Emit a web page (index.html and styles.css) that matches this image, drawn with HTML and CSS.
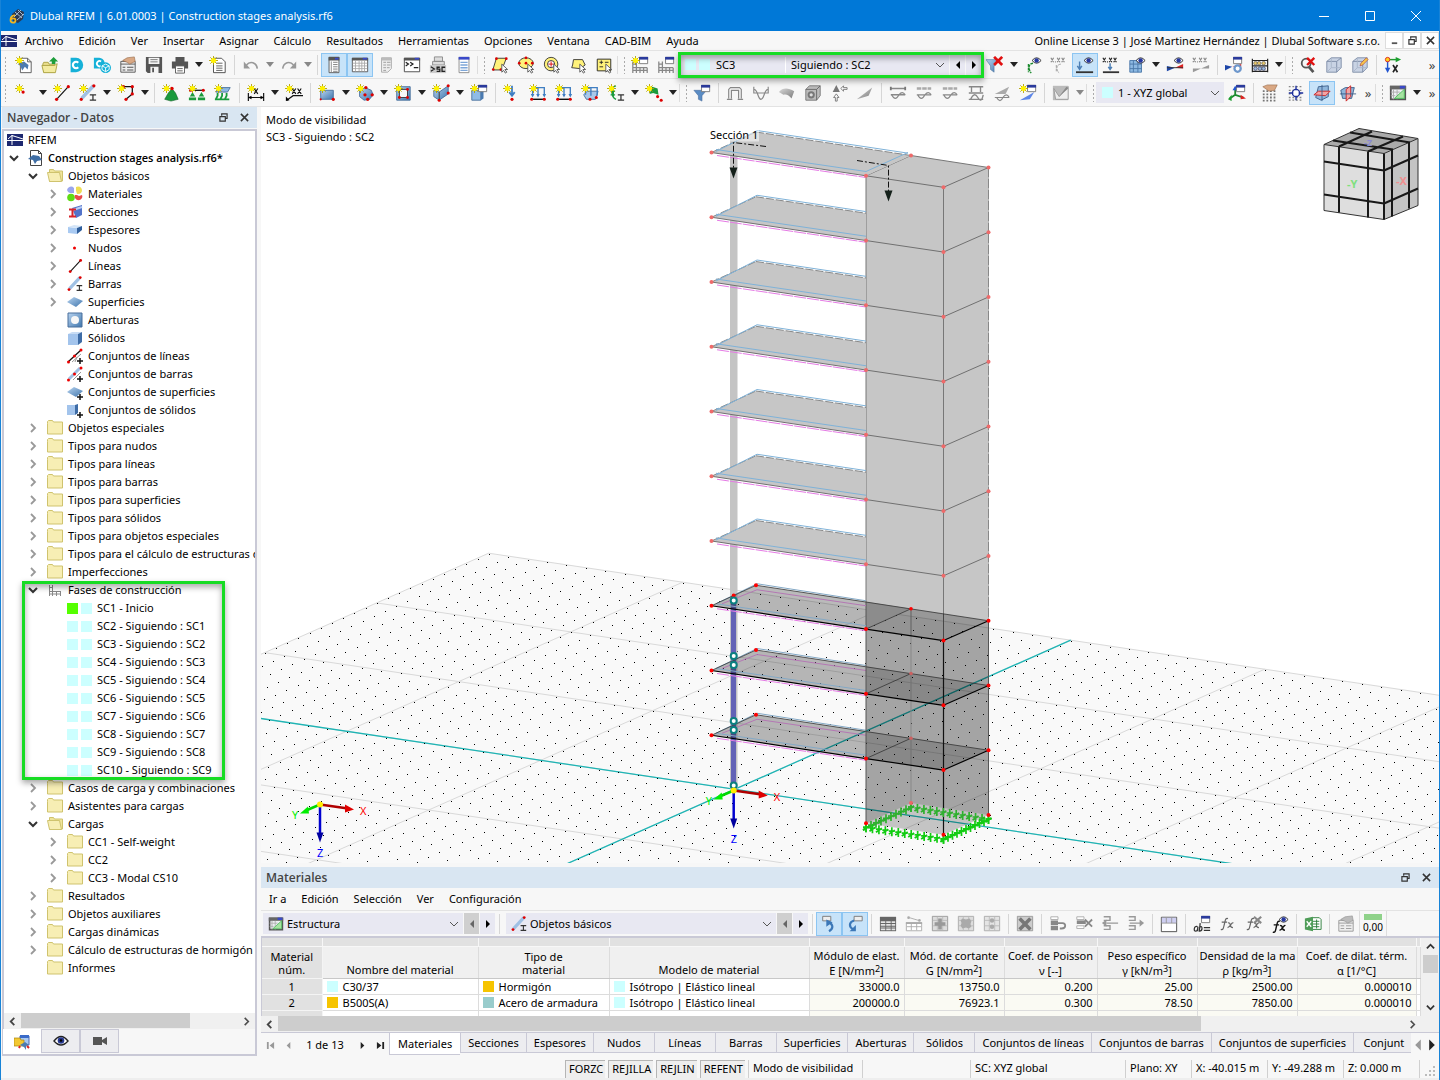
FILE: index.html
```html
<!DOCTYPE html>
<html lang="es">
<head>
<meta charset="utf-8">
<title>Dlubal RFEM | Construction stages analysis.rf6</title>
<link rel="stylesheet" href="styles.css">
</head>
<body>
<svg class="defs" width="0" height="0" aria-hidden="true">
  <defs>
    <linearGradient id="gb" x1="0" y1="0" x2="1" y2="1"><stop offset="0" stop-color="#b9d4f0"/><stop offset="1" stop-color="#3f76ad"/></linearGradient>
    <linearGradient id="gg" x1="0" y1="0" x2="1" y2="1"><stop offset="0" stop-color="#d8d8d8"/><stop offset="1" stop-color="#7b7b7b"/></linearGradient>
  </defs>
</svg>
<svg class="symbols" aria-hidden="true">
  <symbol id="star" viewBox="0 0 20 20"><path d="M5 0v10M0 5h10M1.500 1.500l7 7M8.500 1.500l-7 7" stroke="#b3a100" stroke-width="1"/><circle cx="5" cy="5" r="2.800" fill="#fff200"/></symbol>
  <symbol id="logo" viewBox="0 0 16 12"><path fill="#1d2870" d="M0 0h16v12H0z"/><path d="M0 6.500h16M5 1v10M1 5l4-3.500L16 5" stroke="#fff" fill="none"/></symbol>
  <symbol id="app" viewBox="0 0 16 16"><path d="M3 6l6-5 6 3-1 7-5 4-5-2z" fill="#2c3a52"/><path d="M6 4l7 6M9 2l5 5M5 9l7-7M8 12l7-6" stroke="#a9bdd4"/><path d="M6 7.500C3 7 1.500 9.500 1.500 12c0 3.500 5 3.500 5 .5s-4-2.500-5-.5" fill="none" stroke="#f3b61f" stroke-width="1.800"/></symbol>
  <symbol id="new" viewBox="0 0 20 20"><path d="M6 2.500h8l4 4v12H6z" fill="#fff" stroke="#555"/><path d="M14 2.500v4h4" fill="none" stroke="#555"/><path d="M3 9l7-3 5 4-1 5-3-3-3 4-2-5z" fill="#4d7cb0"/><use href="#star"/></symbol>
  <symbol id="open" viewBox="0 0 20 20"><path d="M2 9l1-2h5l1 2h6v9H3z" fill="#e9dd8b" stroke="#a9a040"/><path d="M1 10.500h14l3-2-2 10H3z" fill="#f3eba0" stroke="#a9a040"/><path d="M12 9V6h-3l5-5 5 5h-3v3z" fill="#1d9e3b"/></symbol>
  <symbol id="cee" viewBox="0 0 20 20"><path d="M4 2h6a8 8 0 0 1 0 16H4z" fill="#16b1d8"/><path d="M12.500 7.500a3.500 3.500 0 1 0 0 5" stroke="#fff" stroke-width="2.400" fill="none"/></symbol>
  <symbol id="cloud" viewBox="0 0 20 20"><path d="M1 2h6a7 7 0 0 1 4 12H1z" fill="#16b1d8"/><path d="M9 6a3 3 0 1 0 0 5" stroke="#fff" stroke-width="2" fill="none"/><circle cx="14" cy="13" r="6" fill="#16b1d8"/><path d="M14 9l4 2v4l-4 2.500-4-2.500v-4zM10 11l4 2 4-2M14 13v4.500" fill="none" stroke="#fff"/></symbol>
  <symbol id="block" viewBox="0 0 20 20"><path d="M2 6h16v12H2z" fill="#eee" stroke="#555"/><path d="M2 9h16" stroke="#555"/><path d="M4 12h3v1H4zm5 0h7v1H9zm-5 3h3v1H4zm5 0h7v1H9z" fill="#555"/><path d="M4 5l5-3 8-1 1 5-6 3-3-2z" fill="#d9a884" stroke="#8d5f3d" stroke-width=".6"/></symbol>
  <symbol id="save" viewBox="0 0 20 20"><path d="M1 1h18v18H3l-2-2z" fill="#555"/><path d="M4 2h12v7H4zM6 12h9v7H6z" fill="#f4f4f4"/><path d="M6 4h8M6 6.500h8" stroke="#777"/><path d="M8 13h2v5H8z" fill="#555"/></symbol>
  <symbol id="print" viewBox="0 0 20 20"><path d="M5 1h10v5H5zM1 6h18v8H1z" fill="#555"/><path d="M5 11h10v8H5z" fill="#fff" stroke="#555"/><path d="M7 14h6M7 16.500h6" stroke="#555"/></symbol>
  <symbol id="report" viewBox="0 0 20 20"><path d="M5 2.500h9l4 4v12H5z" fill="#fff" stroke="#444"/><path d="M8 8h7M8 11h7M8 13.500h7M8 16h7" stroke="#555"/><use href="#star"/></symbol>
  <symbol id="undo" viewBox="0 0 20 20"><path d="M5 10c4-5 11-3 12 4" fill="none" stroke="#999" stroke-width="1.800"/><path d="M2 6v8h7z" fill="#999"/></symbol>
  <symbol id="redo" viewBox="0 0 20 20"><path d="M15 10C11 5 4 7 3 14" fill="none" stroke="#999" stroke-width="1.800"/><path d="M18 6v8h-7z" fill="#999"/></symbol>
  <symbol id="navi" viewBox="0 0 20 20"><path d="M4.500 1.500h11v17h-11z" fill="#fff" stroke="#555"/><path d="M4 1h12v4H4z" fill="#555"/><path d="M11 2h4v2h-4z" fill="#3a49c8"/><path d="M7 6v12" stroke="#888"/><path d="M9 7h5M9 9.500h5M9 12h5M9 14.500h5M9 17h5" stroke="#777"/></symbol>
  <symbol id="grid" viewBox="0 0 20 20"><path d="M1.500 2.500h17v15h-17z" fill="#fff" stroke="#555"/><path d="M1 2h18v3H1z" fill="#555"/><path d="M13 2h5v2h-5z" fill="#3a49c8"/><path d="M5 5v12M9 5v12M12 5v12M15 5v12M2 8h16M2 11h16M2 14h16" stroke="#aaa"/></symbol>
  <symbol id="navg" viewBox="0 0 20 20"><path d="M5 2h11v12l-4 4H5z" fill="#eee" stroke="#aaa"/><path d="M5 2h11v3H5z" fill="#bbb"/><path d="M7 7h3M11 7h4M7 10h3M11 10h4M7 13h3M11 13h3M7 16h3" stroke="#999"/></symbol>
  <symbol id="con" viewBox="0 0 20 20"><path d="M1.500 2.500h17v15h-17z" fill="#fff" stroke="#444"/><path d="M1 2h18v3H1z" fill="#555"/><path d="M13 2h5v2h-5z" fill="#3a49c8"/><path d="M3 7l3 2-3 2M8 7l3 2-3 2M12 13h5" fill="none" stroke="#222" stroke-width="1.400"/></symbol>
  <symbol id="sc" viewBox="0 0 20 20"><path d="M6 1h9v5H6zM4 6h13v4H4z" fill="#ddd" stroke="#888"/><path d="M1 10h18v9H1z" fill="#ccc"/><path d="M2 12l4 2.500L2 17M12 12.500H9v2h3v2.500H8.500M18 12.500h-3.500v4.500H18" fill="none" stroke="#222" stroke-width="1.400"/></symbol>
  <symbol id="navb" viewBox="0 0 20 20"><path d="M4.500 1.500h11v17h-11z" fill="#fff" stroke="#888"/><path d="M4 1h12v3H4z" fill="#3a49c8"/><path d="M6 7h8M6 10h8M6 13h8M6 16h8" stroke="#7da6d8" stroke-width="1.500"/></symbol>
  <symbol id="cur" viewBox="0 0 20 20"><path d="M12 9v9l2-2 2 3 1.500-1-2-3h3z" fill="#fff" stroke="#555"/></symbol>
  <symbol id="selp" viewBox="0 0 20 20"><path d="M6 2.500h11l-5 13H2z" fill="#fff27a" stroke="#333"/><g fill="#d00"><circle cx="6" cy="3" r="1.500"/><circle cx="17" cy="3" r="1.500"/><circle cx="2.500" cy="15" r="1.500"/><circle cx="11" cy="15" r="1.500"/></g><use href="#cur"/></symbol>
  <symbol id="sele" viewBox="0 0 20 20"><ellipse cx="10" cy="8" rx="8" ry="6" fill="#fff27a" stroke="#333"/><g fill="#d00"><circle cx="2.500" cy="8" r="1.500"/><circle cx="10" cy="2" r="1.500"/><circle cx="10" cy="8" r="1.500"/><circle cx="17" cy="8" r="1.500"/></g><use href="#cur"/></symbol>
  <symbol id="selc" viewBox="0 0 20 20"><circle cx="9" cy="9" r="7.500" fill="#fff27a" stroke="#333"/><circle cx="9" cy="9" r="4" fill="#fff" stroke="#333"/><path d="M9 6v6M6 9h6" stroke="#d00"/><use href="#cur"/></symbol>
  <symbol id="sell" viewBox="0 0 20 20"><path d="M5 4h10l3 6-6 4-9-1 1-3z" fill="#fff27a" stroke="#333"/><use href="#cur"/></symbol>
  <symbol id="selpm" viewBox="0 0 20 20"><path d="M2.500 3.500h15v13h-15z" fill="#fff27a" stroke="#222"/><path d="M5 7h4M7 5v4M5 12h4M11 7h4" stroke="#222"/><use href="#cur"/></symbol>
  <symbol id="win" viewBox="0 0 20 20"><path d="M9.500 1.500h9v7h-9z" fill="#fff" stroke="#777"/><path d="M9 1h10v3H9z" fill="#2a3a9c"/></symbol>
  <symbol id="stg" viewBox="0 0 20 20"><path d="M2 6v13M6 6v13M2 9h4M2 13h16M10 13v6M14 13v6M18 13v6M2 16h16" stroke="#888" stroke-width="1.400" fill="none"/><use href="#win"/></symbol>
  <symbol id="stgn" viewBox="0 0 20 20"><use href="#stg"/><use href="#star"/></symbol>
  <symbol id="funx" viewBox="0 0 20 20"><path d="M0 4h14l-5 7v7l-4-3v-4z" fill="url(#gb)" stroke="#5076a0" stroke-width=".6"/><path d="M9 1l9 9M18 1l-9 9" stroke="#e01010" stroke-width="3"/></symbol>
  <symbol id="eye" viewBox="0 0 20 20"><path d="M9 5q5-6 10 0-5 6-10 0z" fill="#fff" stroke="#222"/><circle cx="14" cy="5" r="2.500" fill="#2638a0"/></symbol>
  <symbol id="xxx" viewBox="0 0 20 20"><path d="M1 2l3 5M4 2L1 7M5.500 6.500h1M8 2l3 5M11 2L8 7M13 2l3 5M16 2l-3 5" fill="none" stroke-width="1.300"/></symbol>
  <symbol id="eye1" viewBox="0 0 20 20"><path d="M10 8c-6 1-5 7-2 11M5 9v9" fill="none" stroke="#1b8a2e" stroke-width="1.600" stroke-dasharray="3 1"/><use href="#eye"/></symbol>
  <symbol id="xxg" viewBox="0 0 20 20"><use href="#xxx" stroke="#888"/><path d="M12 9c-6 1-5 6-2 10M7 10v8" fill="none" stroke="#999" stroke-dasharray="3 1"/></symbol>
  <symbol id="eye2" viewBox="0 0 20 20"><path d="M4 6v8M1.500 11L4 15l2.500-4" stroke="#4c7fb5" fill="none" stroke-width="1.600"/><path d="M0 18h19" stroke="#333" stroke-width="2"/><use href="#eye"/></symbol>
  <symbol id="xxb" viewBox="0 0 20 20"><use href="#xxx" stroke="#222"/><path d="M9 8v7M7 12l2 3 2-3" stroke="#4c7fb5" fill="none" stroke-width="1.600"/><path d="M1 18h18" stroke="#333" stroke-width="2"/></symbol>
  <symbol id="gride" viewBox="0 0 20 20"><path d="M2 5h13v13H2z" fill="#8db9e2" stroke="#4b78a8"/><path d="M6 5v13M11 5v13M2 9h13M2 14h13" stroke="#4b78a8"/><use href="#eye"/></symbol>
  <symbol id="wede" viewBox="0 0 20 20"><path d="M1 11v6l9-4z" fill="#1d46a8"/><path d="M10 13l9-4v5z" fill="#d22"/><path d="M1 13h18" stroke="#333"/><use href="#eye"/></symbol>
  <symbol id="wedg" viewBox="0 0 20 20"><use href="#xxx" stroke="#888"/><path d="M1 11v7l9-4 9-4v4H1z" fill="#999"/></symbol>
  <symbol id="wedw" viewBox="0 0 20 20"><path d="M0 10v6l8-4z" fill="#1d46a8"/><path d="M8 12h10v-3z" fill="#d22"/><circle cx="14" cy="14" r="3.500" fill="#fff" stroke="#6d97cc" stroke-width="2.500"/><use href="#win"/></symbol>
  <symbol id="aba" viewBox="0 0 20 20"><path d="M1.500 3v15M18.500 3v15M1 5h18M1 11h18M1 17h18" stroke="#222" stroke-width="1.300"/><g fill="#e8c76a" stroke="#555" stroke-width=".7"><circle cx="5" cy="8" r="2"/><circle cx="9" cy="8" r="2"/><circle cx="14" cy="8" r="2"/></g><g fill="#9dbbe0" stroke="#335" stroke-width=".7"><circle cx="5" cy="14" r="2"/><circle cx="10" cy="14" r="2"/><circle cx="14" cy="14" r="2"/></g></symbol>
  <symbol id="magx" viewBox="0 0 20 20"><circle cx="8" cy="8" r="5" fill="none" stroke="#555" stroke-width="2"/><path d="M11 12l5 6" stroke="#555" stroke-width="3"/><path d="M9 2l8 8M17 2L9 10" stroke="#e01010" stroke-width="2.600"/></symbol>
  <symbol id="cube" viewBox="0 0 20 20"><path d="M2 6l5-4h11v11l-5 5H2z" fill="#c9d3e4" stroke="#7c8ba5"/><path d="M2 6h11v12M13 6l5-4" fill="none" stroke="#7c8ba5"/><path d="M7 2v11h11M7 13l-5 5" fill="none" stroke="#a9b5ca"/></symbol>
  <symbol id="cubep" viewBox="0 0 20 20"><use href="#cube"/><path d="M10 11l1-3 6-6 2 2-6 6z" fill="#f7c64a" stroke="#a33" stroke-width=".6"/></symbol>
  <symbol id="axx" viewBox="0 0 20 20"><path d="M4 4h10" stroke="#1b9e2e" stroke-width="1.600"/><path d="M13 1l6 3-6 3z" fill="#1b9e2e"/><path d="M4 4v10" stroke="#2255d0" stroke-width="1.600"/><path d="M1 13h6l-3 6z" fill="#2255d0"/><circle cx="4" cy="4" r="2.500" fill="#ffd21a" stroke="#d22"/><path d="M10 10l5 8M15 10l-5 8" stroke="#222" stroke-width="1.800"/></symbol>
  <symbol id="node" viewBox="0 0 20 20"><use href="#star"/><circle cx="9" cy="9" r="1.800" fill="#d00"/></symbol>
  <symbol id="line" viewBox="0 0 20 20"><path d="M4 17L17 3" stroke="#111" stroke-width="1.300"/><circle cx="4" cy="17" r="1.800" fill="#d00"/><circle cx="17" cy="3" r="1.800" fill="#d00"/></symbol>
  <symbol id="linen" viewBox="0 0 20 20"><use href="#line"/><use href="#star"/></symbol>
  <symbol id="bar" viewBox="0 0 20 20"><path d="M3 16L16 2" stroke="#9fc0e4" stroke-width="4"/><circle cx="2.500" cy="17" r="1.800" fill="#d00"/><circle cx="16.500" cy="2" r="1.800" fill="#d00"/><path d="M12 12h7M12 18h7M15.500 12v6" stroke="#333" stroke-width="1.400"/></symbol>
  <symbol id="barn" viewBox="0 0 20 20"><use href="#bar"/><use href="#star"/></symbol>
  <symbol id="poly" viewBox="0 0 20 20"><path d="M7 3h10v8l-7 6" fill="none" stroke="#111" stroke-width="1.400"/><g fill="#d00"><circle cx="7" cy="3" r="1.800"/><circle cx="17" cy="3" r="1.800"/><circle cx="17" cy="11" r="1.800"/><circle cx="10" cy="17" r="1.800"/></g><use href="#star"/></symbol>
  <symbol id="sup" viewBox="0 0 20 20"><path d="M11 5l4 5 3 7-8 2-7-2 4-7z" fill="#1a9a3c" stroke="#0c5c20" stroke-width=".6"/><circle cx="11" cy="5" r="2" fill="#d00"/><use href="#star"/></symbol>
  <symbol id="supl" viewBox="0 0 20 20"><path d="M2 7h16" stroke="#111" stroke-width="1.400"/><path d="M5 9l3 5H2zM15 9l3 5h-6zM1 15h8v3H1zM11 15h8v3h-8z" fill="#1a9a3c"/><circle cx="3" cy="7" r="1.700" fill="#d00"/><circle cx="17" cy="7" r="1.700" fill="#d00"/><use href="#star"/></symbol>
  <symbol id="sups" viewBox="0 0 20 20"><path d="M5 4h13l-3 5H2z" fill="#8db9e2" stroke="#486f9c"/><path d="M4 10v3l-2 4M9 10v3l-2 4M14 10v3l-2 4M1 17h16" fill="none" stroke="#1a9a3c" stroke-width="2"/><use href="#star"/></symbol>
  <symbol id="dim" viewBox="0 0 20 20"><path d="M1.500 10v9M18.500 10v9M1 15h18M8 5l4 6M12 5l-4 6" stroke="#111" stroke-width="1.300"/><path d="M1 15l4-2v4zM19 15l-4-2v4z"/><use href="#star"/></symbol>
  <symbol id="dimxx" viewBox="0 0 20 20"><path d="M2 18l7-5h11M8 5l4 6M12 5l-4 6M14 5l4 6M18 5l-4 6" stroke="#111" fill="none" stroke-width="1.300"/><path d="M1 19v-5l4 4z"/><use href="#star"/></symbol>
  <symbol id="srf" viewBox="0 0 20 20"><path d="M3 7h14v10H3z" fill="url(#gb)" stroke="#486f9c"/><circle cx="17" cy="17" r="1.800" fill="#d00"/><circle cx="3" cy="17" r="1.200" fill="#d00"/><use href="#star"/></symbol>
  <symbol id="srf2" viewBox="0 0 20 20"><path d="M4 7l6-3 7 3 2 5-4 5-6 1-5-4z" fill="url(#gb)" stroke="#486f9c"/><g fill="#d00"><circle cx="11" cy="4" r="1.800"/><circle cx="18" cy="12" r="1.800"/><circle cx="10" cy="12" r="1.800"/><circle cx="13" cy="17" r="1.800"/></g><use href="#star"/></symbol>
  <symbol id="opn" viewBox="0 0 20 20"><path d="M3 3h15v15H3z" fill="url(#gb)" stroke="#486f9c"/><path d="M6 6h9v9H6z" fill="#f7f7f7" stroke="#333"/><g fill="#d00"><circle cx="6" cy="15" r="1.600"/><circle cx="15" cy="15" r="1.600"/><circle cx="15" cy="6" r="1.600"/></g><use href="#star"/></symbol>
  <symbol id="sol" viewBox="0 0 20 20"><path d="M2 7l6 2 10-7v9l-10 7-6-4z" fill="url(#gb)" stroke="#486f9c"/><path d="M8 9v9" stroke="#333"/><g fill="#d00"><circle cx="8" cy="18" r="1.700"/><circle cx="18" cy="2" r="1.700"/><circle cx="18" cy="10" r="1.700"/></g><use href="#star"/></symbol>
  <symbol id="solw" viewBox="0 0 20 20"><path d="M2 7h10v11H2z" fill="#8fbbe6" stroke="#486f9c"/><path d="M12 7l3-2v11l-3 2z" fill="#4a7ab0"/><use href="#win"/><use href="#star"/></symbol>
  <symbol id="ld1" viewBox="0 0 20 20"><path d="M10 2v9M7 9l3 4 3-4" stroke="#3f7ec2" stroke-width="2" fill="none"/><circle cx="10" cy="17" r="1.800" fill="#d00"/><use href="#star"/></symbol>
  <symbol id="ld2" viewBox="0 0 20 20"><path d="M4 13V4h13v9M10 4v9" stroke="#3f7ec2" stroke-width="1.500" fill="none"/><path d="M2 11h4l-2 4zM8 11h4l-2 4zM15 11h4l-2 4z" fill="#3f7ec2"/><path d="M2 17h16" stroke="#111" stroke-width="1.600"/><circle cx="3" cy="17" r="1.700" fill="#d00"/><circle cx="17" cy="17" r="1.700" fill="#d00"/><use href="#star"/></symbol>
  <symbol id="ld3" viewBox="0 0 20 20"><path d="M3 12l4-4h12l-3 9H6z" fill="#a9c8ea" stroke="#486f9c"/><path d="M5 12V4h13v9M11 4v9" stroke="#3f7ec2" stroke-width="1.500" fill="none"/><circle cx="10" cy="17" r="1.700" fill="#d00"/><circle cx="17" cy="15" r="1.700" fill="#d00"/><use href="#star"/></symbol>
  <symbol id="ld4" viewBox="0 0 20 20"><path d="M10 2C4 3 4 14 10 17M7 4v10M4 8h5M4 12h5" stroke="#1a9a3c" stroke-width="1.500" fill="none"/><path d="M12 12h7M12 18h7M15.500 12v6" stroke="#333" stroke-width="1.400"/><use href="#star"/></symbol>
  <symbol id="ld5" viewBox="0 0 20 20"><path d="M8 3l6 2 1 7-6-2-4 1z" fill="#1a9a3c"/><circle cx="14" cy="14" r="1.700" fill="#d00"/><circle cx="18" cy="18" r="1.700" fill="#d00"/><use href="#star"/></symbol>
  <symbol id="fun" viewBox="0 0 20 20"><path d="M1 7h14l-5 6v6l-4-2v-4z" fill="#5a8cc4" stroke="#44699a" stroke-width=".6"/><use href="#win"/></symbol>
  <symbol id="g1" viewBox="0 0 20 20"><path d="M3 16V6l2-2h10l2 2v10M6 16V7h8v9M1 17h6M13 17h6" fill="none" stroke="#888" stroke-width="1.300"/></symbol>
  <symbol id="g2" viewBox="0 0 20 20"><path d="M2 3v7h16V3M2 6c5 0 4 11 8 11s3-11 8-11" fill="none" stroke="#888" stroke-width="1.300"/></symbol>
  <symbol id="g3" viewBox="0 0 20 20"><path d="M1 9c4-5 10-5 17-1l-3 8c-3-4-6-5-9-4z" fill="url(#gg)"/></symbol>
  <symbol id="g4" viewBox="0 0 20 20"><path d="M2 6l4-4h12v11l-4 5H2z" fill="#bbb" stroke="#777"/><path d="M2 6h12v12M14 6l4-4" fill="none" stroke="#666"/><circle cx="8" cy="12" r="4" fill="#777"/><circle cx="8" cy="12" r="1.800" fill="#ddd"/></symbol>
  <symbol id="g5" viewBox="0 0 20 20"><path d="M7 1l4 8H3z" fill="#777"/><path d="M12 5l3-3v2h4v2h-4v2zM7 11l3 4H8v4H6v-4H4z" fill="none" stroke="#777"/></symbol>
  <symbol id="g6" viewBox="0 0 20 20"><path d="M1 17L18 4l-4 9z" fill="url(#gg)"/></symbol>
  <symbol id="g7" viewBox="0 0 20 20"><path d="M2 5h16M2 12h16" stroke="#888" stroke-width="1.600"/><path d="M3 12q4 8 8 0 4-5 7 0" fill="none" stroke="#888" stroke-width="1.300"/><path d="M2 3v4M18 3v4" stroke="#777" stroke-width="2"/></symbol>
  <symbol id="g8" viewBox="0 0 20 20"><path d="M2 5h16" stroke="#aaa" stroke-width="3" stroke-dasharray="5 1"/><path d="M2 12h16M3 12q4 8 8 0 4-5 7 0" fill="none" stroke="#888" stroke-width="1.300"/></symbol>
  <symbol id="g9" viewBox="0 0 20 20"><path d="M2 3h16M5 3v6M15 3v6M2 10h16M2 17h16M4 17q4-9 8-2t6-3" fill="none" stroke="#888" stroke-width="1.500"/></symbol>
  <symbol id="g10" viewBox="0 0 20 20"><path d="M2 11L18 3l-4 8z" fill="#aaa"/><path d="M2 15h16M4 15q4 7 7 0 4-6 7 0" fill="none" stroke="#888" stroke-width="1.300"/></symbol>
  <symbol id="wew" viewBox="0 0 20 20"><path d="M1 18l16-9-5 8z" fill="#5d86e8"/><use href="#win"/><use href="#star"/></symbol>
  <symbol id="pen" viewBox="0 0 20 20"><path d="M1 2h17v16H1z" fill="#bbb"/><path d="M2 5l6 9L18 3v14H4z" fill="#eee" stroke="#999"/><path d="M8 14l8-11 2 2z" fill="#888"/></symbol>
  <symbol id="cs" viewBox="0 0 20 20"><path d="M8 12l9 3M8 12l-6 4M8 12V5" stroke="#1b8a2e" stroke-width="2"/><path d="M14 12l6 4-6 1z" fill="#d22"/><path d="M4 12v7l-4-2z" fill="#1b9e2e"/><path d="M5 7h6L8 2z" fill="#2255d0"/><use href="#win"/></symbol>
  <symbol id="gdots" viewBox="0 0 20 20"><path d="M2 8h16M2 11.500h16M2 15h16M2 18.500h16" stroke="#777" stroke-width="2" stroke-dasharray="2 2"/></symbol>
  <symbol id="hg" viewBox="0 0 20 20"><use href="#gdots"/><path d="M2 3l5-2h11l-3 6-6 1z" fill="#d9a884" stroke="#8d5f3d" stroke-width=".6"/></symbol>
  <symbol id="sg" viewBox="0 0 20 20"><path d="M2 3h16M2 7h16M2 11h16M2 15h16M2 18h16" stroke="#888" stroke-width="1.400" stroke-dasharray="2 2"/><circle cx="10" cy="10" r="4" fill="#fff" stroke="#1c2f9c" stroke-width="1.500"/><path d="M10 2v5M10 13v5M2 10h5M13 10h5" stroke="#1c2f9c" stroke-width="1.500"/></symbol>
  <symbol id="pl1" viewBox="0 0 20 20"><path d="M6 3l11-1v12l-8 4-6-3z" fill="#8fb6dc" stroke="#3c5f8a"/><path d="M1 12l5-4h13l-5 5z" fill="#f5a3a3" stroke="#c22"/><path d="M10 1v18" stroke="#3c5f8a"/></symbol>
  <symbol id="pl2" viewBox="0 0 20 20"><path d="M2 7l5-3h10l-3 12H4z" fill="#8fb6dc" stroke="#3c5f8a"/><path d="M8 6l5-4v12l-5 5z" fill="#f5a3a3" stroke="#c22"/><path d="M1 11h18" stroke="#3c5f8a"/></symbol>
  <symbol id="tbl" viewBox="0 0 20 20"><path d="M2 3h16v14H2z" fill="#eef0f4" stroke="#555" stroke-width="2"/><path d="M1 2h18v4H1z" fill="#666"/><path d="M12 2h6v3h-6z" fill="#3a49c8"/><path d="M5 6v11M9 6v11M2 9h10M2 13h5" stroke="#aaa"/><path d="M17 6v10H6z" fill="#a6e3a1" stroke="#4bb85a"/></symbol>
  <symbol id="mat" viewBox="0 0 16 16"><path d="M0 4a4 4 0 0 1 7-2v5H3a4 4 0 0 1-3-3z" fill="#9aa6ee"/><path d="M9 1a4 4 0 0 1 6 3c0 2-1 4-4 4-2 0-1-2-2-3z" fill="#eedd55"/><circle cx="4" cy="11.500" r="3.800" fill="#5fdc12"/><path d="M8 9h2l2 1 3-1a3.800 3.800 0 1 1-7 0z" fill="#e94b4b"/></symbol>
  <symbol id="sec" viewBox="0 0 16 16"><path d="M5 4l10-3v10l-6 3z" fill="#5273c9"/><path d="M6 6l9-3" stroke="#b9cdf5" stroke-width="2"/><path d="M2 5.500h7M2 12.500h7M5.500 5v8" stroke="#d8222a" stroke-width="2"/></symbol>
  <symbol id="esp" viewBox="0 0 16 16"><path d="M1 5l9 1v6l-9-1z" fill="#a9caf2"/><path d="M1 5l6-2 8 1-5 2z" fill="#d4e5f8"/><path d="M10 6l5-2v4l-5 4z" fill="#2f5f9c"/></symbol>
  <symbol id="nud" viewBox="0 0 16 16"><circle cx="7.500" cy="8" r="1.500" fill="#e00"/></symbol>
  <symbol id="sfc" viewBox="0 0 16 16"><path d="M0 8l7-5 9 4-7 6z" fill="url(#gb)"/></symbol>
  <symbol id="abe" viewBox="0 0 16 16"><path d="M1 1h14v14H1z" fill="url(#gb)" stroke="#486f9c"/><circle cx="8" cy="8" r="4" fill="#f7f7f7"/></symbol>
  <symbol id="sld" viewBox="0 0 16 16"><path d="M1 4h10v11H1z" fill="#a3c4ec"/><path d="M1 4l4-2h10l-4 2z" fill="#c8dcf4"/><path d="M11 4l4-2v10l-4 3z" fill="#3e6ca6"/></symbol>
  <symbol id="plus" viewBox="0 0 16 16"><path d="M13 10v6M10 13h6" stroke="#111" stroke-width="1.500"/></symbol>
  <symbol id="cjl" viewBox="0 0 16 16"><path d="M1 14L14 2" stroke="#111" stroke-width="1.300"/><path d="M5 14l9-8M8 14l2-5" stroke="#999" fill="none"/><g fill="#e00"><circle cx="1.500" cy="14" r="1.500"/><circle cx="7.500" cy="8" r="1.500"/><circle cx="14" cy="2" r="1.500"/></g><use href="#plus"/></symbol>
  <symbol id="cjb" viewBox="0 0 16 16"><path d="M2 13L13 2" stroke="#9fc0e4" stroke-width="3"/><path d="M6 14l8-8" stroke="#999"/><g fill="#e00"><circle cx="1.500" cy="14" r="1.500"/><circle cx="7.500" cy="8" r="1.500"/><circle cx="14" cy="2" r="1.500"/></g><use href="#plus"/></symbol>
  <symbol id="cjs" viewBox="0 0 16 16"><use href="#sfc"/><use href="#plus"/></symbol>
  <symbol id="cjv" viewBox="0 0 16 16"><path d="M0 3h8v10H0z" fill="#a3c4ec"/><path d="M8 3l3-1v9l-3 2z" fill="#3e6ca6"/><use href="#plus"/></symbol>
  <symbol id="fol" viewBox="0 0 16 16"><path d="M.5 3.500v-2l1-1h4l1 1.500h9v12H.5z" fill="#f7eeb4" stroke="#cfc36e"/></symbol>
  <symbol id="folo" viewBox="0 0 16 16"><path d="M2.500 13.500v-12h4l1 1.500h8v10z" fill="#efe49a" stroke="#cfc36e"/><path d="M.5 4.500h12l2 9h-12z" fill="#f7eeb4" stroke="#cfc36e"/></symbol>
  <symbol id="fas" viewBox="0 0 16 16"><path d="M2.500 3v11M5.500 3v11M2 5.500h4M2 9.500h12M9.500 9v5M13.500 9v5M2 12h12" stroke="#888" fill="none"/></symbol>
  <symbol id="fil" viewBox="0 0 16 16"><path d="M2.500.5h8l3 3v12h-11z" fill="#fff" stroke="#444"/><path d="M10.500.5v3h3" fill="none" stroke="#444"/><path d="M0 9l5-4 6 1 3 4-5 1-2 3-2-4z" fill="#3f6ea5"/></symbol>
  <symbol id="chd" viewBox="0 0 10 10"><path d="M1 3l4 4 4-4" fill="none" stroke="#333" stroke-width="2"/></symbol>
  <symbol id="chr" viewBox="0 0 10 10"><path d="M3 1l4 4-4 4" fill="none" stroke="#999" stroke-width="1.800"/></symbol>
  <symbol id="chl" viewBox="0 0 10 10"><path d="M7 1L3 5l4 4" fill="none" stroke="#444" stroke-width="2"/></symbol>
  <symbol id="thn" viewBox="0 0 10 10"><path d="M1 3l4 4 4-4" fill="none" stroke="#555"/></symbol>
  <symbol id="flt" viewBox="0 0 10 10"><path d="M3 3V1h6v5H7M1 4h6v5H1z" fill="none" stroke="#333" stroke-width="1.300"/></symbol>
  <symbol id="cls" viewBox="0 0 10 10"><path d="M1 1l8 8M9 1L1 9" stroke="#333" stroke-width="1.700"/></symbol>
  <symbol id="tl" viewBox="0 0 10 10"><path d="M7 1v8L3 5z"/></symbol>
  <symbol id="tr" viewBox="0 0 10 10"><path d="M3 1v8l4-4z"/></symbol>
  <symbol id="tlb" viewBox="0 0 10 10"><path d="M9 1v8L4 5zM1 1h2v8H1z"/></symbol>
  <symbol id="trb" viewBox="0 0 10 10"><path d="M1 1v8l5-4zM7 1h2v8H7z"/></symbol>
  <symbol id="dat" viewBox="0 0 16 16"><path d="M6 2h9v9H6z" fill="#a9caf2" stroke="#4a69b0"/><path d="M6 1h9v3H6z" fill="#3a6ac8"/><path d="M0 4h6l1 2h3v6H0z" fill="#f3c832" stroke="#a98510" stroke-width=".7"/><path d="M6 11l5-3 4 3-3 1v4l-2-3z" fill="#4d7cb0"/><path d="M6 12l-1 2M13 12l2 2" stroke="#d22" stroke-width="2"/></symbol>
  <symbol id="vis" viewBox="0 0 16 16"><path d="M1 8q7-9 14 0-7 8-14 0z" fill="#fff" stroke="#222" stroke-width="1.400"/><circle cx="8" cy="7.500" r="3.300" fill="#26388f"/><circle cx="8" cy="7.500" r="1.300"/></symbol>
  <symbol id="cam" viewBox="0 0 16 16"><path d="M1 4h9v8H1zM10 7l5-3v8l-5-3z" fill="#555"/></symbol>
  <symbol id="ar1" viewBox="0 0 20 20"><path d="M3 1.500h9v5H3z" fill="#eee" stroke="#777"/><path d="M10 8c5 3 5 7 0 10" fill="none" stroke="#3c78b8" stroke-width="2.400"/><path d="M7 5v8l7-5z" fill="#3c78b8"/></symbol>
  <symbol id="ar2" viewBox="0 0 20 20"><path d="M9 1.500h9v5H9z" fill="#eee" stroke="#777"/><path d="M9 6c-6 2-6 7-1 10" fill="none" stroke="#3c78b8" stroke-width="2.400"/><path d="M11 11v7H4z" fill="#3c78b8"/></symbol>
  <symbol id="t1" viewBox="0 0 20 20"><path d="M1 2h18v16H1z" fill="#666"/><path d="M2 7h5v2H2zM8 7h5v2H8zM14 7h4v2h-4zM2 10h5v2H2zM8 10h5v2H8zM14 10h4v2h-4zM2 13h5v1H2zM8 13h5v1H8zM14 13h4v1h-4zM2 15h5v2H2zM8 15h5v2H8zM14 15h4v2h-4z" fill="#e4e4e4"/></symbol>
  <symbol id="t2" viewBox="0 0 20 20"><path d="M1.500 8.500h17v9h-17z" fill="#fff" stroke="#aaa"/><path d="M1 8h18v2H1z" fill="#aaa"/><path d="M2 13h16M7 10v7M13 10v7M5 3l10 3" stroke="#aaa"/><circle cx="4" cy="3" r="1.500" fill="#aaa"/><circle cx="16" cy="6" r="1.500" fill="#aaa"/></symbol>
  <symbol id="t3" viewBox="0 0 20 20"><path d="M1.500 1.500h17v16h-17z" fill="#ddd" stroke="#999"/><path d="M2 6h16M2 12h16M7 2v15M13 2v15" stroke="#bbb"/><path d="M8 4h4v4h4v4h-4v4H8v-4H4V8h4z" fill="#999"/></symbol>
  <symbol id="t4" viewBox="0 0 20 20"><path d="M1.500 1.500h17v16h-17z" fill="#ddd" stroke="#aaa"/><path d="M2 6h16M2 12h16M7 2v15M13 2v15" stroke="#bbb"/><path d="M6 4l4 1 4-1 2 3-1 3 1 3-3 2-3-1-4 1-2-3 1-3-1-3z" fill="#aaa"/></symbol>
  <symbol id="t5" viewBox="0 0 20 20"><path d="M1.500 1.500h17v16h-17z" fill="#e4e4e4" stroke="#aaa"/><path d="M2 6h16M2 12h16M7 2v15M13 2v15" stroke="#bbb"/><circle cx="10" cy="6" r="2.500" fill="#aaa"/><circle cx="10" cy="13" r="2.500" fill="#aaa"/></symbol>
  <symbol id="t6" viewBox="0 0 20 20"><path d="M1.500 1.500h17v16h-17z" fill="#ccc" stroke="#999"/><path d="M4 4l12 12M16 4L4 16" stroke="#777" stroke-width="4"/></symbol>
  <symbol id="r1" viewBox="0 0 20 20"><path d="M2 2h8v3H2z" fill="#fff" stroke="#aaa"/><path d="M2 6h8v5H2zM2 12h8v5H2z" fill="#888"/><path d="M10 9h5q3 0 3 3t-4 3h-2" fill="none" stroke="#888" stroke-width="2"/></symbol>
  <symbol id="r2" viewBox="0 0 20 20"><path d="M2 2h8v3H2zM2 12h8v3H2z" fill="#fff" stroke="#aaa"/><path d="M2 6h10v4H2z" fill="#888"/><path d="M11 5l8 8M19 5l-8 8" stroke="#888" stroke-width="2"/></symbol>
  <symbol id="r3" viewBox="0 0 20 20"><path d="M3 2h7v4H3M3 12h7v4H3M19 9H6" fill="none" stroke="#999" stroke-width="1.600"/><path d="M1 9l5-4v8z" fill="#999"/></symbol>
  <symbol id="r4" viewBox="0 0 20 20"><path d="M2 2h7v4H2M2 12h7v4H2M3 9h12" fill="none" stroke="#999" stroke-width="1.600"/><path d="M19 9l-5-4v8z" fill="#999"/></symbol>
  <symbol id="hd" viewBox="0 0 20 20"><path d="M1.500 2.500h17v16h-17z" fill="#fff" stroke="#444"/><path d="M2 3h16v6H2z" fill="#cfcff2"/><path d="M7 3v6M13 3v6M2 9h16" stroke="#999"/></symbol>
  <symbol id="eff" viewBox="0 0 20 20"><path d="M10 4c-3-1-3 2-4 6s-1 7-4 6M3 8h6" fill="none"/><path d="M10 9q2-1 2.500 2t3 3M16 9q-1-1-3 2t-3.500 3" fill="none"/></symbol>
  <symbol id="ab" viewBox="0 0 20 20"><path d="M5 13q-3-1-3.500 2T3 18t2.500-5l-.5 5M8 9l-1 9q3 0 3-3t-2.500-1.500M12 14h7M12 17h7" fill="none" stroke="#333" stroke-width="1.400"/><use href="#win"/></symbol>
  <symbol id="fx" viewBox="0 0 20 20"><use href="#eff" stroke="#666" stroke-width="1.300"/></symbol>
  <symbol id="fxx" viewBox="0 0 20 20"><use href="#eff" stroke="#666" stroke-width="1.300"/><path d="M10 2l8 7M18 2l-8 7" stroke="#888" stroke-width="2.400"/></symbol>
  <symbol id="fxe" viewBox="0 0 20 20"><use href="#eff" y="3" stroke="#111" stroke-width="1.600"/><use href="#eye"/></symbol>
  <symbol id="xls" viewBox="0 0 20 20"><path d="M8 3h9l2 2v11H8z" fill="#fff" stroke="#267a34"/><path d="M10 7h7M10 10h7M10 13h7M14 5v10" stroke="#267a34"/><path d="M1 4l9-2v16l-9-2z" fill="#4f9d58"/><path d="M3 7l5 6M8 7l-5 6" stroke="#fff" stroke-width="1.500"/></symbol>
  <symbol id="blg" viewBox="0 0 20 20"><path d="M2 6h16v12H2z" fill="#eee" stroke="#999"/><path d="M2 9h16M4 12h4M10 12h6M4 15h4M10 15h6" stroke="#999"/><path d="M4 5l5-3 8-1 1 5-6 3-3-2z" fill="#bbb" stroke="#888" stroke-width=".6"/></symbol>
</svg>

<div class="window">
  <header class="titlebar">
    <svg class="i16"><use href="#app"/></svg>
    <h1>Dlubal RFEM | 6.01.0003 | Construction stages analysis.rf6</h1>
    <button class="wb" aria-label="Minimizar"><svg viewBox="0 0 10 10"><path d="M0 5.500h10"/></svg></button>
    <button class="wb" aria-label="Maximizar"><svg viewBox="0 0 10 10"><path d="M.5.5h9v9h-9z"/></svg></button>
    <button class="wb" aria-label="Cerrar"><svg viewBox="0 0 10 10"><path d="M0 0l10 10M10 0L0 10"/></svg></button>
  </header>

  <nav class="menubar">
    <svg class="brand"><use href="#logo"/></svg>
    <button>Archivo</button><button>Edición</button><button>Ver</button><button>Insertar</button><button>Asignar</button><button>Cálculo</button><button>Resultados</button><button>Herramientas</button><button>Opciones</button><button>Ventana</button><button>CAD-BIM</button><button>Ayuda</button>
    <span class="license">Online License 3 | José Martinez Hernández | Dlubal Software s.r.o.</span>
    <button class="mdi" aria-label="Minimizar vista"><svg viewBox="0 0 10 10"><path d="M2 8h6" stroke="#555" stroke-width="2"/></svg></button>
    <button class="mdi" aria-label="Restaurar vista"><svg><use href="#flt"/></svg></button>
    <button class="mdi" aria-label="Cerrar vista"><svg><use href="#cls"/></svg></button>
  </nav>

  <div class="toolbar">
    <i class="grip"></i>
    <button class="tb" aria-label="Nuevo"><svg><use href="#new"/></svg></button>
    <button class="tb" aria-label="Abrir"><svg><use href="#open"/></svg></button>
    <button class="tb" aria-label="Centro"><svg><use href="#cee"/></svg></button>
    <button class="tb" aria-label="Nube"><svg><use href="#cloud"/></svg></button>
    <button class="tb" aria-label="Bloques"><svg><use href="#block"/></svg></button>
    <button class="tb" aria-label="Guardar"><svg><use href="#save"/></svg></button>
    <button class="tb" aria-label="Imprimir"><svg><use href="#print"/></svg></button><button class="dd" aria-label="Más"></button>
    <button class="tb" aria-label="Informe"><svg><use href="#report"/></svg></button>
    <i class="sep"></i>
    <button class="tb" aria-label="Deshacer"><svg><use href="#undo"/></svg></button><button class="dd off" aria-label="Más"></button>
    <button class="tb" aria-label="Rehacer"><svg><use href="#redo"/></svg></button><button class="dd off" aria-label="Más"></button>
    <i class="sep"></i>
    <button class="tb on" aria-label="Navegador"><svg><use href="#navi"/></svg></button>
    <button class="tb on" aria-label="Tablas"><svg><use href="#grid"/></svg></button>
    <button class="tb" aria-label="Panel"><svg><use href="#navg"/></svg></button>
    <button class="tb" aria-label="Consola"><svg><use href="#con"/></svg></button>
    <button class="tb" aria-label="Scripts"><svg><use href="#sc"/></svg></button>
    <button class="tb" aria-label="Lista"><svg><use href="#navb"/></svg></button>
    <i class="grip edge"></i>
    <button class="tb" aria-label="Selección rombo"><svg><use href="#selp"/></svg></button>
    <button class="tb" aria-label="Selección elipse"><svg><use href="#sele"/></svg></button>
    <button class="tb" aria-label="Selección anillo"><svg><use href="#selc"/></svg></button>
    <button class="tb" aria-label="Selección lazo"><svg><use href="#sell"/></svg></button>
    <button class="tb" aria-label="Selección especial"><svg><use href="#selpm"/></svg></button>
    <i class="grip edge"></i>
    <button class="tb" aria-label="Nueva fase"><svg><use href="#stgn"/></svg></button>
    <button class="tb" aria-label="Editar fases"><svg><use href="#stg"/></svg></button>
    <div class="stagebox marked">
      <div class="combo stage">
        <b class="sw"></b><b class="sw"></b><span class="code">SC3</span>
        <select aria-label="Fase de construcción"><option>Siguiendo : SC2</option></select>
        <svg class="chev"><use href="#thn"/></svg>
      </div>
      <button class="step" aria-label="Anterior"><svg><use href="#tl"/></svg></button>
      <button class="step" aria-label="Siguiente"><svg><use href="#tr"/></svg></button>
    </div>
    <button class="tb" aria-label="Quitar filtro"><svg><use href="#funx"/></svg></button><button class="dd" aria-label="Más"></button>
    <button class="tb" aria-label="Ver apoyos"><svg><use href="#eye1"/></svg></button>
    <button class="tb" aria-label="Valores de apoyos"><svg><use href="#xxg"/></svg></button>
    <button class="tb on" aria-label="Ver cargas"><svg><use href="#eye2"/></svg></button>
    <button class="tb" aria-label="Valores de cargas"><svg><use href="#xxb"/></svg></button>
    <button class="tb" aria-label="Ver malla"><svg><use href="#gride"/></svg></button><button class="dd" aria-label="Más"></button>
    <button class="tb" aria-label="Ver resultados"><svg><use href="#wede"/></svg></button>
    <button class="tb" aria-label="Valores de resultados"><svg><use href="#wedg"/></svg></button>
    <i class="sep"></i>
    <button class="tb" aria-label="Configurar resultados"><svg><use href="#wedw"/></svg></button>
    <button class="tb" aria-label="Calcular"><svg><use href="#aba"/></svg></button><button class="dd" aria-label="Más"></button>
    <i class="grip edge"></i>
    <button class="tb" aria-label="Restablecer zoom"><svg><use href="#magx"/></svg></button>
    <button class="tb" aria-label="Vista isométrica"><svg><use href="#cube"/></svg></button>
    <button class="tb" aria-label="Editar vista"><svg><use href="#cubep"/></svg></button>
    <i class="sep"></i>
    <button class="tb" aria-label="Vista en X"><svg><use href="#axx"/></svg></button>
    <button class="more last">»</button>
  </div>

  <div class="toolbar">
    <i class="grip"></i>
    <button class="tb" aria-label="Nudo"><svg><use href="#node"/></svg></button><button class="dd" aria-label="Más"></button>
    <button class="tb" aria-label="Línea"><svg><use href="#linen"/></svg></button>
    <button class="tb" aria-label="Barra"><svg><use href="#barn"/></svg></button><button class="dd" aria-label="Más"></button>
    <button class="tb" aria-label="Polilínea"><svg><use href="#poly"/></svg></button><button class="dd" aria-label="Más"></button>
    <i class="sep"></i>
    <button class="tb" aria-label="Apoyo en nudo"><svg><use href="#sup"/></svg></button>
    <button class="tb" aria-label="Apoyo en línea"><svg><use href="#supl"/></svg></button>
    <button class="tb" aria-label="Apoyo en superficie"><svg><use href="#sups"/></svg></button>
    <i class="sep"></i>
    <button class="tb" aria-label="Cota"><svg><use href="#dim"/></svg></button><button class="dd" aria-label="Más"></button>
    <button class="tb" aria-label="Nota"><svg><use href="#dimxx"/></svg></button>
    <i class="sep"></i>
    <button class="tb" aria-label="Superficie"><svg><use href="#srf"/></svg></button><button class="dd" aria-label="Más"></button>
    <button class="tb" aria-label="Superficie curva"><svg><use href="#srf2"/></svg></button><button class="dd" aria-label="Más"></button>
    <button class="tb" aria-label="Abertura"><svg><use href="#opn"/></svg></button><button class="dd" aria-label="Más"></button>
    <button class="tb" aria-label="Sólido"><svg><use href="#sol"/></svg></button><button class="dd" aria-label="Más"></button>
    <button class="tb" aria-label="Bloque"><svg><use href="#solw"/></svg></button>
    <i class="sep"></i>
    <button class="tb" aria-label="Carga en nudo"><svg><use href="#ld1"/></svg></button>
    <button class="tb" aria-label="Carga en barra"><svg><use href="#ld2"/></svg></button>
    <button class="tb" aria-label="Carga en línea"><svg><use href="#ld2"/></svg></button>
    <button class="tb" aria-label="Carga en superficie"><svg><use href="#ld3"/></svg></button>
    <button class="tb" aria-label="Imperfección"><svg><use href="#ld4"/></svg></button><button class="dd" aria-label="Más"></button>
    <button class="tb" aria-label="Desplazamiento"><svg><use href="#ld5"/></svg></button><button class="dd" aria-label="Más"></button>
    <i class="grip edge"></i>
    <button class="tb" aria-label="Filtro"><svg><use href="#fun"/></svg></button>
    <i class="sep"></i>
    <button class="tb" aria-label="Deformación"><svg><use href="#g1"/></svg></button>
    <button class="tb" aria-label="Barras"><svg><use href="#g2"/></svg></button>
    <button class="tb" aria-label="Superficies"><svg><use href="#g3"/></svg></button>
    <button class="tb" aria-label="Sólidos"><svg><use href="#g4"/></svg></button>
    <button class="tb" aria-label="Reacciones"><svg><use href="#g5"/></svg></button>
    <button class="tb" aria-label="Secciones"><svg><use href="#g6"/></svg></button>
    <i class="sep"></i>
    <button class="tb" aria-label="Diagrama 1"><svg><use href="#g7"/></svg></button>
    <button class="tb" aria-label="Diagrama 2"><svg><use href="#g8"/></svg></button>
    <button class="tb" aria-label="Diagrama 3"><svg><use href="#g8"/></svg></button>
    <button class="tb" aria-label="Diagrama 4"><svg><use href="#g9"/></svg></button>
    <button class="tb" aria-label="Diagrama 5"><svg><use href="#g10"/></svg></button>
    <button class="tb" aria-label="Nuevo diagrama"><svg><use href="#wew"/></svg></button>
    <i class="sep"></i>
    <button class="tb" aria-label="Editar"><svg><use href="#pen"/></svg></button><button class="dd off" aria-label="Más"></button>
    <i class="grip edge"></i>
    <div class="combo coord">
      <b class="sw"></b>
      <select aria-label="Sistema de coordenadas"><option>1 - XYZ global</option></select>
      <svg class="chev"><use href="#thn"/></svg>
    </div>
    <button class="tb" aria-label="Sistema nuevo"><svg><use href="#cs"/></svg></button>
    <i class="sep"></i>
    <button class="tb" aria-label="Rejilla"><svg><use href="#hg"/></svg></button>
    <button class="tb" aria-label="Forzar cursor"><svg><use href="#sg"/></svg></button>
    <button class="tb on" aria-label="Plano XY"><svg><use href="#pl1"/></svg></button>
    <button class="tb" aria-label="Plano XZ"><svg><use href="#pl2"/></svg></button>
    <button class="more">»</button>
    <i class="grip edge"></i>
    <button class="tb" aria-label="Tabla"><svg><use href="#tbl"/></svg></button><button class="dd" aria-label="Más"></button>
    <button class="more last">»</button>
  </div>

  <div class="work">
    <aside class="nav">
      <div class="panelhead"><h2>Navegador - Datos</h2><button aria-label="Desacoplar"><svg><use href="#flt"/></svg></button><button aria-label="Cerrar"><svg><use href="#cls"/></svg></button></div>
      <div class="treebox">
        <ul class="tree">
          <li class="r0"><svg class="brand"><use href="#logo"/></svg>RFEM</li>
          <li class="r1"><svg class="ch"><use href="#chd"/></svg><svg class="i16"><use href="#fil"/></svg><strong>Construction stages analysis.rf6*</strong></li>
          <li class="r2"><svg class="ch"><use href="#chd"/></svg><svg class="i16"><use href="#folo"/></svg>Objetos básicos</li>
          <li class="r3"><svg class="ch"><use href="#chr"/></svg><svg class="i16"><use href="#mat"/></svg>Materiales</li>
          <li class="r3"><svg class="ch"><use href="#chr"/></svg><svg class="i16"><use href="#sec"/></svg>Secciones</li>
          <li class="r3"><svg class="ch"><use href="#chr"/></svg><svg class="i16"><use href="#esp"/></svg>Espesores</li>
          <li class="r3"><svg class="ch"><use href="#chr"/></svg><svg class="i16"><use href="#nud"/></svg>Nudos</li>
          <li class="r3"><svg class="ch"><use href="#chr"/></svg><svg class="i16"><use href="#line"/></svg>Líneas</li>
          <li class="r3"><svg class="ch"><use href="#chr"/></svg><svg class="i16"><use href="#bar"/></svg>Barras</li>
          <li class="r3"><svg class="ch"><use href="#chr"/></svg><svg class="i16"><use href="#sfc"/></svg>Superficies</li>
          <li class="r3"><i class="ch"></i><svg class="i16"><use href="#abe"/></svg>Aberturas</li>
          <li class="r3"><i class="ch"></i><svg class="i16"><use href="#sld"/></svg>Sólidos</li>
          <li class="r3"><i class="ch"></i><svg class="i16"><use href="#cjl"/></svg>Conjuntos de líneas</li>
          <li class="r3"><i class="ch"></i><svg class="i16"><use href="#cjb"/></svg>Conjuntos de barras</li>
          <li class="r3"><i class="ch"></i><svg class="i16"><use href="#cjs"/></svg>Conjuntos de superficies</li>
          <li class="r3"><i class="ch"></i><svg class="i16"><use href="#cjv"/></svg>Conjuntos de sólidos</li>
          <li class="r2"><svg class="ch"><use href="#chr"/></svg><svg class="i16"><use href="#fol"/></svg>Objetos especiales</li>
          <li class="r2"><svg class="ch"><use href="#chr"/></svg><svg class="i16"><use href="#fol"/></svg>Tipos para nudos</li>
          <li class="r2"><svg class="ch"><use href="#chr"/></svg><svg class="i16"><use href="#fol"/></svg>Tipos para líneas</li>
          <li class="r2"><svg class="ch"><use href="#chr"/></svg><svg class="i16"><use href="#fol"/></svg>Tipos para barras</li>
          <li class="r2"><svg class="ch"><use href="#chr"/></svg><svg class="i16"><use href="#fol"/></svg>Tipos para superficies</li>
          <li class="r2"><svg class="ch"><use href="#chr"/></svg><svg class="i16"><use href="#fol"/></svg>Tipos para sólidos</li>
          <li class="r2"><svg class="ch"><use href="#chr"/></svg><svg class="i16"><use href="#fol"/></svg>Tipos para objetos especiales</li>
          <li class="r2"><svg class="ch"><use href="#chr"/></svg><svg class="i16"><use href="#fol"/></svg>Tipos para el cálculo de estructuras de hormigón</li>
          <li class="r2"><svg class="ch"><use href="#chr"/></svg><svg class="i16"><use href="#fol"/></svg>Imperfecciones</li>
          <li class="phases">
            <ul>
              <li class="r2"><svg class="ch"><use href="#chd"/></svg><svg class="i16"><use href="#fas"/></svg>Fases de construcción</li>
              <li class="rs"><b class="sw green"></b><b class="sw"></b>SC1 - Inicio</li>
              <li class="rs"><b class="sw"></b><b class="sw"></b>SC2 - Siguiendo : SC1</li>
              <li class="rs"><b class="sw"></b><b class="sw"></b>SC3 - Siguiendo : SC2</li>
              <li class="rs"><b class="sw"></b><b class="sw"></b>SC4 - Siguiendo : SC3</li>
              <li class="rs"><b class="sw"></b><b class="sw"></b>SC5 - Siguiendo : SC4</li>
              <li class="rs"><b class="sw"></b><b class="sw"></b>SC6 - Siguiendo : SC5</li>
              <li class="rs"><b class="sw"></b><b class="sw"></b>SC7 - Siguiendo : SC6</li>
              <li class="rs"><b class="sw"></b><b class="sw"></b>SC8 - Siguiendo : SC7</li>
              <li class="rs"><b class="sw"></b><b class="sw"></b>SC9 - Siguiendo : SC8</li>
              <li class="rs"><b class="sw"></b><b class="sw"></b>SC10 - Siguiendo : SC9</li>
            </ul>
          </li>
          <li class="r2"><svg class="ch"><use href="#chr"/></svg><svg class="i16"><use href="#fol"/></svg>Casos de carga y combinaciones</li>
          <li class="r2"><svg class="ch"><use href="#chr"/></svg><svg class="i16"><use href="#fol"/></svg>Asistentes para cargas</li>
          <li class="r2"><svg class="ch"><use href="#chd"/></svg><svg class="i16"><use href="#folo"/></svg>Cargas</li>
          <li class="r3"><svg class="ch"><use href="#chr"/></svg><svg class="i16"><use href="#fol"/></svg>CC1 - Self-weight</li>
          <li class="r3"><svg class="ch"><use href="#chr"/></svg><svg class="i16"><use href="#fol"/></svg>CC2</li>
          <li class="r3"><svg class="ch"><use href="#chr"/></svg><svg class="i16"><use href="#fol"/></svg>CC3 - Modal CS10</li>
          <li class="r2"><svg class="ch"><use href="#chr"/></svg><svg class="i16"><use href="#fol"/></svg>Resultados</li>
          <li class="r2"><svg class="ch"><use href="#chr"/></svg><svg class="i16"><use href="#fol"/></svg>Objetos auxiliares</li>
          <li class="r2"><svg class="ch"><use href="#chr"/></svg><svg class="i16"><use href="#fol"/></svg>Cargas dinámicas</li>
          <li class="r2"><svg class="ch"><use href="#chr"/></svg><svg class="i16"><use href="#fol"/></svg>Cálculo de estructuras de hormigón</li>
          <li class="r2"><i class="ch"></i><svg class="i16"><use href="#fol"/></svg>Informes</li>
        </ul>
        <div class="hscroll"><svg><use href="#chl"/></svg><div class="track"><div class="thumb"></div></div><svg class="dark"><use href="#chr"/></svg></div>
      </div>
      <div class="navtabs"><button class="sel" aria-label="Datos"><svg class="i16"><use href="#dat"/></svg></button><button aria-label="Mostrar"><svg class="i16"><use href="#vis"/></svg></button><button aria-label="Vistas"><svg class="i16"><use href="#cam"/></svg></button></div>
    </aside>

    <main class="main">
      <div class="view">
        <svg id="scene" viewBox="261 107 1178 757" preserveAspectRatio="xMidYMid slice">
          <g id="ground"></g>
          <g id="model"></g>
          <g id="labels">
            <rect x="709" y="129" width="50" height="13" fill="#fff" opacity=".5"/>
            <text x="266" y="124">Modo de visibilidad</text>
            <text x="266" y="141">SC3 - Siguiendo : SC2</text>
            <text x="710" y="139">Sección 1</text>
          </g>
          <g transform="translate(1260 110)" stroke-linejoin="round">
            <path fill="#dedede" d="M64 35l60 9v66l-60-9z"/><path fill="#c4c4c4" d="M124 44l34-15v67l-34 14z"/><path fill="#aaa" d="M64 35l35-16 59 10-34 15z"/>
            <path fill="none" stroke="#333" d="M64 35l60 9v66l-60-9zM124 44l34-15v67l-34 14M64 35l35-16 59 10"/>
            <path fill="none" stroke="#181818" stroke-width="2" d="M79 37v66M108 42v66M64 52l60 9M64 85l60 9M132 40v67M149 33v66M124 61l34-15M124 94l34-15M79 37l33-15M108 42l35-15M73 31l60 9M90 23l60 10M124 44v66"/>
            <text x="87" y="78" font-size="11" font-weight="700" fill="#7fe07f">-Y</text><text x="136" y="75" font-size="11" font-weight="700" fill="#f09090">-X</text><text x="104" y="36" font-size="9" font-weight="700" fill="#8a8ad0">-Z</text>
          </g>
        </svg>
      </div>

      <section class="tables">
        <div class="panelhead"><h2>Materiales</h2><button aria-label="Desacoplar"><svg><use href="#flt"/></svg></button><button aria-label="Cerrar"><svg><use href="#cls"/></svg></button></div>
        <div class="submenu"><button>Ir a</button><button>Edición</button><button>Selección</button><button>Ver</button><button>Configuración</button></div>
        <div class="toolbar tt">
          <div class="combo estr"><svg class="i16"><use href="#tbl"/></svg><select aria-label="Categoría"><option>Estructura</option></select><svg class="chev"><use href="#thn"/></svg></div>
          <button class="step gray" aria-label="Anterior"><svg><use href="#tl"/></svg></button><button class="step" aria-label="Siguiente"><svg><use href="#tr"/></svg></button>
          <i class="sep wide"></i>
          <div class="combo obj"><svg class="i16"><use href="#bar"/></svg><select aria-label="Grupo"><option>Objetos básicos</option></select><svg class="chev"><use href="#thn"/></svg></div>
          <button class="step gray" aria-label="Anterior"><svg><use href="#tl"/></svg></button><button class="step" aria-label="Siguiente"><svg><use href="#tr"/></svg></button>
          <i class="sep"></i>
          <button class="tb on" aria-label="Desde gráfico"><svg><use href="#ar1"/></svg></button>
          <button class="tb on" aria-label="Hacia gráfico"><svg><use href="#ar2"/></svg></button>
          <i class="sep"></i>
          <button class="tb" aria-label="Tabla completa"><svg><use href="#t1"/></svg></button>
          <button class="tb" aria-label="Tabla por línea"><svg><use href="#t2"/></svg></button>
          <button class="tb" aria-label="Añadir"><svg><use href="#t3"/></svg></button>
          <button class="tb" aria-label="Ajustar"><svg><use href="#t4"/></svg></button>
          <button class="tb" aria-label="Nodos"><svg><use href="#t5"/></svg></button>
          <i class="sep"></i>
          <button class="tb" aria-label="Eliminar"><svg><use href="#t6"/></svg></button>
          <i class="sep"></i>
          <button class="tb" aria-label="Copiar fila"><svg><use href="#r1"/></svg></button>
          <button class="tb" aria-label="Borrar fila"><svg><use href="#r2"/></svg></button>
          <button class="tb" aria-label="Insertar fila"><svg><use href="#r3"/></svg></button>
          <button class="tb" aria-label="Mover fila"><svg><use href="#r4"/></svg></button>
          <i class="sep"></i>
          <button class="tb" aria-label="Encabezado"><svg><use href="#hd"/></svg></button>
          <i class="sep"></i>
          <button class="tb" aria-label="Parámetros"><svg><use href="#ab"/></svg></button>
          <button class="tb" aria-label="Función"><svg><use href="#fx"/></svg></button>
          <button class="tb" aria-label="Quitar función"><svg><use href="#fxx"/></svg></button>
          <button class="tb" aria-label="Ver función"><svg><use href="#fxe"/></svg></button>
          <i class="sep"></i>
          <button class="tb" aria-label="Excel"><svg><use href="#xls"/></svg></button>
          <i class="sep"></i>
          <button class="tb" aria-label="Biblioteca"><svg><use href="#blg"/></svg></button>
          <i class="endline"></i>
          <button class="tb decimals" aria-label="Decimales"><i></i><span>0,00</span></button>
          <i class="endline"></i>
        </div>
        <div class="gridwrap">
          <div class="gridclip">
            <table>
              <colgroup><col class="c60"><col class="c156"><col class="c131"><col class="c200"><col class="c95"><col class="c100"><col class="c93"><col class="c100"><col class="c100"><col class="c119"><col></colgroup>
              <thead>
                <tr class="strip"><td></td><td></td><td></td><td></td><td></td><td></td><td></td><td></td><td></td><td></td><td></td></tr>
                <tr><th class="rh tight">Material<br>núm.</th><th class="tight">Nombre del material</th><th class="tight">Tipo de<br>material</th><th class="tight">Modelo de material</th><th>Módulo de elast.<br>E [N/mm<sup>2</sup>]</th><th>Mód. de cortante<br>G [N/mm<sup>2</sup>]</th><th>Coef. de Poisson<br>ν [--]</th><th>Peso específico<br>γ [kN/m<sup>3</sup>]</th><th>Densidad de la ma<br>ρ [kg/m<sup>3</sup>]</th><th>Coef. de dilat. térm.<br>α [1/°C]</th><th></th></tr>
              </thead>
              <tbody>
                <tr><th class="rh">1</th><td><b class="sw"></b>C30/37</td><td><b class="sw gold"></b>Hormigón</td><td><b class="sw"></b>Isótropo | Elástico lineal</td><td class="n">33000.0</td><td class="n">13750.0</td><td class="n">0.200</td><td class="n">25.00</td><td class="n">2500.00</td><td class="n">0.000010</td><td></td></tr>
                <tr><th class="rh">2</th><td><b class="sw gold"></b>B500S(A)</td><td><b class="sw teal"></b>Acero de armadura</td><td><b class="sw"></b>Isótropo | Elástico lineal</td><td class="n">200000.0</td><td class="n">76923.1</td><td class="n">0.300</td><td class="n">78.50</td><td class="n">7850.00</td><td class="n">0.000010</td><td></td></tr>
                <tr><th class="rh"></th><td></td><td></td><td></td><td class="n"></td><td class="n"></td><td class="n"></td><td class="n"></td><td class="n"></td><td class="n"></td><td></td></tr>
              </tbody>
            </table>
          </div>
          <div class="vscroll"><svg class="up"><use href="#chd"/></svg><div class="thumb"></div><svg><use href="#chd"/></svg></div>
        </div>
        <div class="hscroll"><svg><use href="#chl"/></svg><div class="track"><div class="thumb wide"></div></div><svg class="dark"><use href="#chr"/></svg><i class="corner"></i></div>
        <div class="sheets">
          <div class="pager"><button aria-label="Primera"><svg><use href="#tlb"/></svg></button><button aria-label="Anterior"><svg><use href="#tl"/></svg></button><span>1 de 13</span><button class="k" aria-label="Siguiente"><svg><use href="#tr"/></svg></button><button class="k" aria-label="Última"><svg><use href="#trb"/></svg></button></div>
          <div class="sheetlist"><button class="sel">Materiales</button><button>Secciones</button><button>Espesores</button><button>Nudos</button><button>Líneas</button><button>Barras</button><button>Superficies</button><button>Aberturas</button><button>Sólidos</button><button>Conjuntos de líneas</button><button>Conjuntos de barras</button><button>Conjuntos de superficies</button><button>Conjunt</button></div>
          <div class="sheetnav"><button aria-label="Pestañas anteriores"><svg><use href="#tl"/></svg></button><button class="k" aria-label="Pestañas siguientes"><svg><use href="#tr"/></svg></button></div>
        </div>
      </section>
    </main>
  </div>

  <footer class="status">
    <button>FORZC</button><button>REJILLA</button><button>REJLIN</button><button>REFENT</button>
    <span class="mode">Modo de visibilidad</span><span class="cs">SC: XYZ global</span><span class="plane">Plano: XY</span><span class="xyz">X: -40.015 m</span><span class="xyz">Y: -49.288 m</span><span class="xyz">Z: 0.000 m</span>
    <svg class="size" viewBox="0 0 12 12"><path d="M9 1h2v2H9zM5 5h2v2H5zM9 5h2v2H9zM1 9h2v2H1zM5 9h2v2H5zM9 9h2v2H9z" fill="#bbb"/></svg>
  </footer>
</div>
<script src="scene.js"></script>
</body>
</html>
```
FILE: styles.css
```css
* { box-sizing: border-box; }
body {
  margin: 0;
  font: 11px/16px "Noto Sans", "Open Sans", sans-serif;
  color: #000;
  background: #f7f7f7;
}
button, select {
  font: inherit;
  color: inherit;
  border: 0;
  padding: 0;
  margin: 0;
  background: none;
}
ul { list-style: none; margin: 0; padding: 0; }
h1, h2 { margin: 0; font-weight: 400; }
svg { flex: none; display: block; }
.defs { position: absolute; }
.symbols { display: none; }
.i16 { width: 16px; height: 16px; }
.brand { width: 16px; height: 12px; }
.sw { width: 11px; height: 11px; background: #ccffff; flex: none; }
.sw.green { background: #55ff00; }
.sw.gold { background: #f6c400; }
.sw.teal { background: #99cccc; }

.window {
  height: 100vh;
  display: flex;
  flex-direction: column;
  border-left: 1px solid #1883d7;
  border-right: 1px solid #1883d7;
  overflow: hidden;
}
.titlebar {
  flex: none;
  height: 31px;
  display: flex;
  align-items: center;
  background: #0078d7;
  color: #fff;
  padding-left: 8px;
}
.titlebar h1 { font-size: 11px; line-height: 16px; flex: 1; margin-left: 5px; }
.wb { width: 46px; height: 30px; display: grid; place-items: center; }
.wb svg { width: 10px; height: 10px; fill: none; stroke: #fff; }

.menubar {
  flex: none;
  height: 20px;
  display: flex;
  align-items: center;
  border-bottom: 1px solid #e3e3e3;
}
.menubar > button { padding: 0 7px 0 8px; white-space: nowrap; }
.license { margin-left: auto; margin-right: 5px; white-space: nowrap; }
.menubar > .mdi {
  width: 18px;
  height: 17px;
  padding: 0;
  background: #fff;
  border: 1px solid #ddd;
  display: grid;
  place-items: center;
}
.mdi svg { width: 9px; height: 9px; }

.toolbar {
  flex: none;
  height: 28px;
  display: flex;
  align-items: center;
  border-bottom: 1px solid #e3e3e3;
}
.tb { flex: none; width: 26px; height: 24px; display: grid; place-items: center; border: 1px solid transparent; }
.tb svg { width: 18px; height: 18px; }
.tb.on { background: #c7e3f9; border-color: #8cc5f2; }
.dd { flex: none; width: 12px; height: 24px; display: grid; place-items: center; }
.dd::before { content: ""; border: 4px solid transparent; border-top: 5px solid #222; border-bottom: 0; }
.dd.off::before { border-top-color: #888; }
.sep { flex: none; width: 7px; height: 20px; background: linear-gradient(#d6d6d6, #d6d6d6) 3px 0 / 1px 100% no-repeat; }
.sep.wide { width: 10px; }
.grip { flex: none; width: 10px; height: 18px; background: radial-gradient(circle, #aaa 1px, transparent 1px) 3px 0 / 3px 4px repeat-y; }
.grip.edge { border-left: 1px solid #ddd; background-position: 5px 0; }
.more { flex: none; width: 14px; font-size: 13px; color: #444; }
.more.last { margin-left: auto; }

.combo {
  display: flex;
  align-items: center;
  height: 21px;
  background: #e8e8f2;
  min-width: 0;
}
.combo select { flex: 1; min-width: 0; appearance: none; outline: 0; height: 100%; text-overflow: clip; }
.combo .chev { width: 10px; height: 10px; margin-right: 4px; }
.stagebox { display: flex; flex: none; width: 303px; position: relative; height: 24px; align-items: center; }
.stagebox .combo { flex: 1; padding-left: 6px; margin-right: 1px; }
.stage .sw { margin-right: 3px; }
.stage .code { width: 70px; margin-left: 3px; border-right: 1px solid #fff; }
.stage select { padding-left: 5px; }
.step { flex: none; width: 15px; height: 21px; background: #e8e8f2; display: grid; place-items: center; margin-right: 1px; }
.step svg { width: 10px; height: 10px; }
.step.gray { background: #cfcfcf; fill: #666; }
.marked::after, .phases::after {
  content: "";
  position: absolute;
  inset: -1px -2px -1px -1px;
  border: 3px solid #17dc24;
  box-shadow: 0 3px 6px rgba(0, 0, 0, .35), inset 0 3px 6px rgba(0, 0, 0, .35);
  pointer-events: none;
}
.marked::after { z-index: 2; }
.coord { flex: none; width: 128px; padding-left: 6px; }
.coord select { padding-left: 5px; }

.work { flex: 1; min-height: 0; display: flex; }
.nav { width: 256px; flex: none; display: flex; flex-direction: column; padding-left: 1px; }
.panelhead {
  flex: none;
  height: 21px;
  display: flex;
  align-items: center;
  background: #d9e6f2;
  padding: 0 6px 0 5px;
}
.panelhead h2 { font: 600 12px/16px "Open Sans", "Noto Sans", sans-serif; color: #444; flex: 1; }
.panelhead button { width: 11px; margin-left: 10px; }
.panelhead svg { width: 9px; height: 9px; }
.treebox {
  flex: 1;
  min-height: 0;
  margin-top: 1px;
  background: #fff;
  border: 2px solid #c9c9d6;
  border-bottom: 0;
  display: flex;
  flex-direction: column;
}
.tree { flex: 1; min-height: 0; overflow: hidden; }
.tree li { white-space: nowrap; }
.r0, .r1, .r2, .r3, .rs { display: flex; align-items: center; height: 18px; }
.tree .i16, .tree .brand { margin-right: 5px; }
.r0 { padding-left: 3px; }
.r2 { padding-left: 19px; }
.r3 { padding-left: 39px; }
.rs { padding-left: 63px; }
.rs .sw { margin-right: 3px; }
.rs .sw + .sw { margin-right: 5px; }
.tree strong { font: 600 11px/16px "Open Sans", "Noto Sans", sans-serif; }
.ch { flex: none; width: 10px; height: 10px; margin: 0 9px 0 5px; }
.tree .r1 .i16 { margin-right: 4px; }
.phases { position: relative; }
.phases::after { inset: 0 30px -1px 18px; }
.hscroll { flex: none; height: 16px; display: flex; align-items: center; background: #f0f0f0; }
.hscroll svg { width: 9px; height: 9px; margin: 0 4px; }
.dark { filter: brightness(.5); }
.track { flex: 1; height: 100%; }
.thumb { background: #cdcdcd; }
.track .thumb { width: 78%; height: 15px; }
.track .thumb.wide { width: 82%; }
.navtabs {
  flex: none;
  height: 27px;
  display: flex;
  align-items: flex-start;
  border: 2px solid #c9c9d6;
  border-left-width: 1px;
  border-top: 0;
  margin-bottom: 3px;
}
.navtabs button { width: 39px; height: 24px; display: grid; place-items: center; background: #ededf0; border: 1px solid #c9c9d6; }
.navtabs .sel { width: 38px; background: #fff; height: 25px; border: 0; }

.main { flex: 1; min-width: 0; display: flex; flex-direction: column; padding-left: 4px; }
.view { flex: 1; min-height: 0; background: #fff; margin-bottom: 4px; }
#scene { width: 100%; height: 100%; }
#labels text { font-size: 11px; }

.submenu { flex: none; height: 23px; display: flex; align-items: center; border-bottom: 1px solid #e3e3e3; }
.submenu button { padding: 0 7px 0 8px; }
.tables { flex: none; display: flex; flex-direction: column; }
.tt { height: 25px; padding-left: 2px; border-bottom: 0; }
.tt .combo { padding-left: 5px; margin-right: 1px; }
.tt .combo select { padding-left: 3px; }
.estr { flex: none; width: 200px; }
.obj { flex: none; width: 270px; }
.endline { height: 25px; border-left: 1px solid #ddd; }
.decimals { grid-template-rows: 6px 14px; align-content: center; font-size: 10px; line-height: 14px; }
.decimals i { width: 18px; height: 6px; background: #8fd28a; }
.gridwrap { display: flex; height: 80px; border-top: 2px solid #c9c9d6; border-left: 1px solid #c9c9d6; }
.gridclip { flex: 1; min-width: 0; overflow: hidden; background: #fff; }
table { width: 100%; border-collapse: collapse; table-layout: fixed; white-space: nowrap; }
.c60 { width: 60px; } .c156 { width: 156px; } .c131 { width: 131px; } .c200 { width: 200px; }
.c95 { width: 95px; } .c100 { width: 100px; } .c93 { width: 93px; } .c119 { width: 119px; }
th, td { padding: 0 4px; font-weight: 400; overflow: hidden; border-right: 1px solid #dcdcdc; border-bottom: 1px solid #dcdcdc; height: 16px; line-height: 15px; }
.strip td { height: 8px; background: #e1e1e1; border-color: #f7f7f7; }
thead th { height: 32px; background: #f0f0f0; line-height: 15px; vertical-align: bottom; padding: 0 2px; border-bottom-color: #c8c8c8; }
thead .tight { line-height: 13px; padding-bottom: 2px; }
sup { font-size: 9px; line-height: 0; vertical-align: 3px; }
.rh, thead .rh { background: #e1e1e1; border-color: #f4f4f4; }
td .sw { display: inline-block; margin-right: 5px; vertical-align: -1px; }
.n { text-align: right; background: #fafaf3; }
.vscroll { flex: none; width: 18px; background: #f0f0f0; display: flex; flex-direction: column; align-items: center; padding: 4px 0; }
.vscroll svg { width: 9px; height: 9px; }
.vscroll .up { transform: rotate(180deg); }
.vscroll .thumb { width: 15px; height: 18px; margin: 4px 0 auto; }
.corner { width: 18px; }
.sheets { display: flex; height: 25px; margin-bottom: 2px; overflow: hidden; }
.pager { flex: none; width: 128px; display: flex; align-items: center; border-top: 1px solid #c9c9d6; }
.pager button { width: 18px; display: grid; place-items: center; fill: #999; }
.pager .k, .sheetnav .k { fill: #222; }
.pager span { flex: 1; text-align: center; }
.pager svg { width: 9px; height: 9px; }
.sheetlist { flex: 1; min-width: 0; display: flex; align-items: flex-start; overflow: hidden; border-top: 1px solid #c9c9d6; }
.sheetlist button { flex: none; height: 20px; min-width: 61px; padding: 0 7px; background: #ededf0; border: 1px solid #c9c9d6; border-top: 0; border-right-width: 0; white-space: nowrap; }
.sheetlist .sel { background: #fff; height: 22px; padding: 0 8px; }
.sheetnav { flex: none; width: 28px; display: flex; align-items: center; border-top: 1px solid #c9c9d6; fill: #999; }
.sheetnav svg { width: 14px; height: 14px; }

.status { flex: none; height: 21px; display: flex; align-items: center; padding-left: 564px; border-bottom: 2px solid #eee; }
.status button { height: 18px; padding: 0 2px 0 3px; margin-right: 3px; background: #eee; border-top: 1px solid #b5b5b5; border-left: 1px solid #b5b5b5; }
.status span { white-space: nowrap; height: 18px; border-right: 1px solid #d0d0d0; padding-left: 4px; }
.mode { width: 115px; border-left: 1px solid #d0d0d0; }
.cs { flex: 1; text-align: left; }
.status .cs { margin-left: 107px; border-left: 1px solid #d0d0d0; }
.plane { width: 66px; }
.xyz { width: 76px; }
.size { width: 12px; height: 12px; margin: 4px 3px 0 4px; }
```
FILE: scene.js
```js
// Draws the work plane, the building model and the axis triads.
const ground = [];
const model = [];
const C = [488.7, 553.7];      // far corner of the work plane
const U = [19.4, 2.9];         // one grid step along X
const V = [-11.2, 4.97];       // one grid step along Y
const at = (a, b) => [C[0] + a * U[0] + b * V[0], C[1] + a * U[1] + b * V[1]];
const poly = (pts) => 'M' + pts.map((p) => p.join(' ')).join('L') + 'z';
const seg = (p, q) => 'M' + p.join(' ') + 'L' + q.join(' ');
const path = (d, attrs) => `<path d="${d}" ${attrs}/>`;

// Work plane
const A = 70, B = 80;
ground.push(path(poly([at(0, 0), at(A, 0), at(A, B), at(0, B)]), 'fill="#f9f9f9"'));
let major = '';
for (let a = 0; a <= A; a += 10) major += seg(at(a, 0), at(a, B));
for (let b = 0; b <= B; b += 10) major += seg(at(0, b), at(A, b));
ground.push(path(major, 'fill="none" stroke="#d9d9d9"'));
ground.push(path(seg(at(0, 30), at(A, 30)) + seg(at(30, 0), at(30, B)), 'fill="none" stroke="#1fb5b5" stroke-width="1.3"'));
let dots = '';
for (let a = 0; a <= A; a++) {
  for (let b = 0; b <= B; b++) {
    const [x, y] = at(a, b).map(Math.round);
    if (x > 260 && x < 1440 && y < 865) dots += `M${x} ${y}h1v1h-1z`;
  }
}
ground.push(path(dots, 'fill="#000" shape-rendering="crispEdges"'));

// Floor corners; y is the height of the front left corner
const STEP = 64.75, TOP = 153;
const floor = (i) => {
  const y = TOP + i * STEP;
  return {
    y,
    fl: [711.5, y], bl: [756, y - 20.5],
    cf: [866, y + 23.3], cb: [911, y + 3],
    rf: [943.5, y + 34.8], rb: [988.5, y + 15]
  };
};
const dot = (p, c, r) => `<circle cx="${p[0]}" cy="${p[1]}" r="${r}" fill="${c}"/>`;

// Inactive column and core
model.push('<rect x="730" y="139" width="7.500" height="651" fill="#c4c4c4"/>');
const f0 = floor(0), f7 = floor(7);
model.push(path(poly([f0.cf, f0.cb, f0.rb, f7.rb, f7.cb, f7.cf]), 'fill="#c6c6c6"'));
model.push(path(seg(f0.cf, f7.cf) + seg(f0.rf, f7.rf) + seg(f0.cf, f0.cb) + seg(f0.cb, f0.rb), 'stroke="#777" fill="none"'));
model.push(path(seg(f0.rb, f7.rb), 'stroke="#888" stroke-dasharray="10 1"'));
for (let i = 0; i < 7; i++) {
  const f = floor(i), y = f.y;
  const end = i === 0 ? f.cb : [866, y - 4];
  model.push(path(poly([f.fl, f.bl, end, f.cf]), 'fill="#c6c6c6"'));
  model.push(path(seg(f.fl, f.bl) + seg(f.bl, end), 'stroke="#888" stroke-dasharray="8 2"'));
  model.push(path(seg(f.fl, f.cf) + seg(f.cf, f.rf) + seg(f.rf, f.rb), 'stroke="#707070"'));
  const bx = i === 0 ? 908 : 866;
  const by = y - 22 + (bx - 757) * 0.15;
  model.push(path(`M716 ${y - 1}L757 ${y - 22}L${bx} ${by}M716 ${y - 3}L866 ${y + 19}${i === 0 ? 'L908 153' : ''}`, 'fill="none" stroke="#7fb2d8"'));
  model.push(path(`M717 ${y + 3}L866 ${y + 25}`, 'stroke="#e57be5" stroke-dasharray="12 1"'));
  model.push(dot(f.fl, '#ee6a6a', 2), dot(f.cf, '#ee6a6a', 2), dot(f.rf, '#ee6a6a', 2), dot(f.rb, '#ee6a6a', 2));
}
model.push(dot(f0.cb, '#ee6a6a', 2));

// Active stages
const base = floor(10);
const f8 = floor(8), f9 = floor(9);
model.push(path(poly([f7.cf, f7.cb, f7.rb, base.rb, base.cb, base.cf]), 'fill="#000" fill-opacity=".16"'));
model.push(path(poly([f7.cf, f7.rf, f7.rb, base.rb, base.rf, base.cf]), 'fill="#000" fill-opacity=".21"'));
model.push(path(seg(f7.cb, base.cb), 'stroke="#888"'));
model.push('<rect x="731" y="600" width="5" height="190" fill="#6262b6"/>');
for (const f of [f9, f8, f7]) {
  const y = f.y;
  const shade = f === f7 ? 0.29 : 0.17;
  model.push(path(poly([f.fl, f.bl, [866, y - 4], f.cf]), 'fill="#000" fill-opacity=".27"'));
  model.push(path(poly([f.cf, [866, y - 4], f.cb, f.rb, f.rf]), `fill="#000" fill-opacity="${shade}"`));
  model.push(path(`M722 ${y - 2}L757 ${y - 16}L866 ${y}`, 'fill="none" stroke="#b478b4"'));
  model.push(path(`M717 ${y + 3}L866 ${y + 25}`, 'stroke="#e57be5" stroke-dasharray="12 1"'));
  model.push(path(`M716 ${y - 2}L757 ${y - 22}L866 ${y - 5}M716 ${y - 2}L866 ${y + 20}`, 'fill="none" stroke="#84a9c6"'));
  model.push(path(seg(f.fl, f.bl) + seg(f.bl, f.rb) + seg(f.cb, f.cf), 'fill="none" stroke="#333" stroke-width=".8"'));
  model.push(path(seg(f.fl, f.cf) + seg(f.cf, f.rf) + seg(f.rf, f.rb), 'fill="none" stroke="#000" stroke-width="1.2"'));
}
model.push(path(seg(f7.cf, base.cf) + seg(f7.rb, base.rb), 'stroke="#555"'));
model.push(path(seg(f7.rf, base.rf), 'stroke="#111" stroke-width="1.2"'));

// Line supports round the foot of the core
const support = (p, q, color, n) => {
  let d = '';
  for (let i = 0; i <= n; i++) {
    const x = p[0] + (q[0] - p[0]) * i / n, y = p[1] + (q[1] - p[1]) * i / n + 4;
    d += `M${x} ${y - 4}v9M${x - 3} ${y}h6M${x - 3} ${y + 3}l6-4`;
  }
  model.push(path(d, `fill="none" stroke="${color}" stroke-width="1.7"`));
};
support(base.cf, base.cb, '#2fb02f', 9);
support(base.cb, base.rb, '#2fb02f', 12);
support(base.rf, base.rb, '#12cc12', 10);
support(base.cf, base.rf, '#12cc12', 12);

for (const f of [f7, f8, f9]) {
  for (const k of ['fl', 'bl', 'cf', 'rf', 'rb']) model.push(dot(f[k], '#f00', 2));
  model.push(dot(f.cb, f === f7 ? '#f00' : '#cc6060', 1.8));
}
model.push(dot([733.7, 596], '#f00', 2), dot(base.cf, '#f00', 2), dot(base.rf, '#f00', 2), dot(base.rb, '#f00', 2), dot(base.cb, '#e66', 2));
for (const y of [601, 656.5, 665.5, 721.5, 730.5, 786]) {
  model.push(`<circle cx="733.7" cy="${y}" r="3" fill="#fff" stroke="#0b8080" stroke-width="2"/>`);
}

// Section arrows
model.push(path('M766 147L733.5 143V170M857 161L888.5 166V193', 'fill="none" stroke="#111" stroke-dasharray="6 2 2 2"'));
model.push(path('M729.5 168h8l-4 11zM884.500 191h8l-4 11z', 'fill="#14201a"'));

// Axis triad
const triad = (x, y) => model.push(`<g transform="translate(${x} ${y})" stroke-width="2.5" font-size="11">
  <path d="M0 0L28 4" stroke="#b00000"/><path d="M25 0l9 5-9 3z" fill="#e00000"/>
  <path d="M0 0L-14 6" stroke="#00d800"/><path d="M-12 2l-8 7 9 0z" fill="#00ee00"/>
  <path d="M0 0V30" stroke="#0000d0"/><path d="M-3.500 28h7L0 38z" fill="#0000a0"/>
  <circle r="3" fill="#ffee00"/>
  <g stroke="none"><text x="40" y="10" fill="#f00">X</text><text x="-28" y="14" fill="#0e0">Y</text><text x="-3" y="52" fill="#00f">Z</text></g></g>`);
triad(733.7, 791);
triad(320, 805);

document.getElementById('ground').innerHTML = ground.join('');
document.getElementById('model').innerHTML = model.join('');
```
